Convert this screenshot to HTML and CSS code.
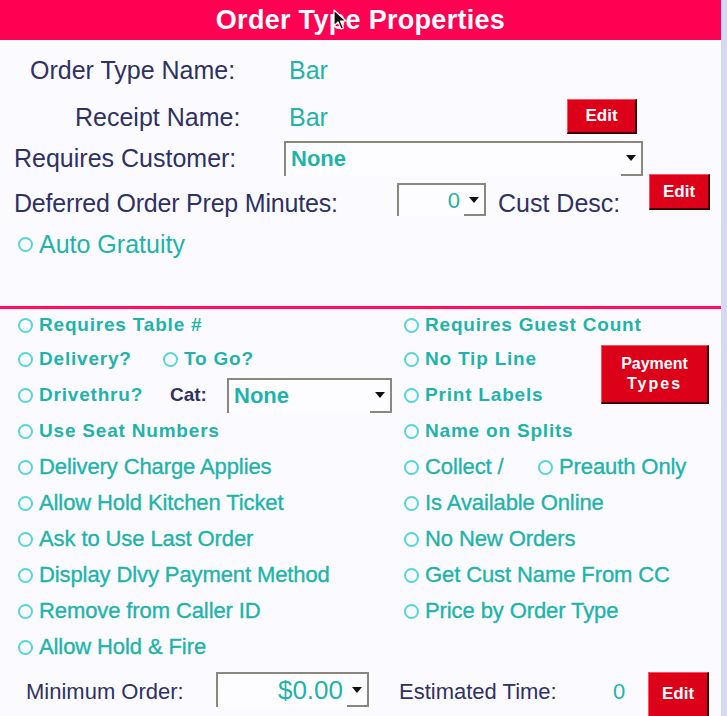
FILE: index.html
```html
<!DOCTYPE html>
<html>
<head>
<meta charset="utf-8">
<link rel="stylesheet" href="styles.css">
</head>
<body>
<div class="panel">
  <div class="header">Order Type Properties
    <svg class="cursor" width="14" height="22" viewBox="0 0 14 22"><path d="M1 1 L1 17 L5 13 L8 20 L10.5 19 L7.5 12 L13 12 Z" fill="#111" stroke="#fff" stroke-width="1.2" stroke-linejoin="round"/></svg>
  </div>

  <div class="top">
    <div class="row r1">
      <span class="lbl w-name">Order Type Name:</span>
      <span class="val">Bar</span>
    </div>
    <div class="row r2">
      <span class="lbl w-rcpt">Receipt Name:</span>
      <span class="val w-rval">Bar</span>
      <button class="btn btn-edit1">Edit</button>
    </div>
    <div class="row r3">
      <span class="lbl w-cust">Requires Customer:</span>
      <div class="combo combo-cust"><span class="combo-text">None</span><span class="combo-arrow"><i class="tri"></i></span></div>
    </div>
    <div class="row r4">
      <span class="lbl w-defer">Deferred Order Prep Minutes:</span>
      <div class="combo combo-defer"><span class="combo-text right num">0</span><span class="combo-arrow"><i class="tri"></i></span></div>
      <span class="lbl w-desc">Cust Desc:</span>
      <button class="btn btn-edit2">Edit</button>
    </div>
    <div class="row r5">
      <span class="radio"></span><span class="opt-top">Auto Gratuity</span>
    </div>
  </div>

  <div class="divider"></div>

  <div class="grid">
    <div class="cell c-left"><span class="radio"></span><span class="opt b">Requires Table #</span></div>
    <div class="cell c-right"><span class="radio"></span><span class="opt b">Requires Guest Count</span></div>

    <div class="cell c-left"><span class="pair w-deliv"><span class="radio"></span><span class="opt b">Delivery?</span></span><span class="radio"></span><span class="opt b">To Go?</span></div>
    <div class="cell c-mid"><span class="radio"></span><span class="opt b">No Tip Line</span></div>
    <button class="btn btn-pay">Payment<br><span class="pay2">Types</span></button>

    <div class="cell c-left"><span class="pair w-drive"><span class="radio"></span><span class="opt b">Drivethru?</span></span><span class="cat">Cat:</span>
      <div class="combo combo-cat"><span class="combo-text">None</span><span class="combo-arrow"><i class="tri"></i></span></div>
    </div>
    <div class="cell c-mid"><span class="radio"></span><span class="opt b">Print Labels</span></div>

    <div class="cell c-left"><span class="radio"></span><span class="opt b">Use Seat Numbers</span></div>
    <div class="cell c-right"><span class="radio"></span><span class="opt b">Name on Splits</span></div>

    <div class="cell c-left"><span class="radio"></span><span class="opt">Delivery Charge Applies</span></div>
    <div class="cell c-right"><span class="pair w-collect"><span class="radio"></span><span class="opt">Collect /</span></span><span class="radio"></span><span class="opt">Preauth Only</span></div>

    <div class="cell c-left"><span class="radio"></span><span class="opt">Allow Hold Kitchen Ticket</span></div>
    <div class="cell c-right"><span class="radio"></span><span class="opt">Is Available Online</span></div>

    <div class="cell c-left"><span class="radio"></span><span class="opt">Ask to Use Last Order</span></div>
    <div class="cell c-right"><span class="radio"></span><span class="opt">No New Orders</span></div>

    <div class="cell c-left"><span class="radio"></span><span class="opt">Display Dlvy Payment Method</span></div>
    <div class="cell c-right"><span class="radio"></span><span class="opt">Get Cust Name From CC</span></div>

    <div class="cell c-left"><span class="radio"></span><span class="opt">Remove from Caller ID</span></div>
    <div class="cell c-right"><span class="radio"></span><span class="opt">Price by Order Type</span></div>

    <div class="cell c-left"><span class="radio"></span><span class="opt">Allow Hold &amp; Fire</span></div>
  </div>

  <div class="bottom">
    <span class="lbl-sm w-min">Minimum Order:</span>
    <div class="combo combo-min"><span class="combo-text right money">$0.00</span><span class="combo-arrow"><i class="tri"></i></span></div>
    <span class="lbl-sm w-est">Estimated Time:</span>
    <span class="est-val">0</span>
    <button class="btn btn-edit3">Edit</button>
  </div>
</div>
</body>
</html>
```

FILE: styles.css
```css
html, body {
  margin: 0;
  padding: 0;
}
body {
  background: #d7d7f6;
  font-family: "Liberation Sans", Arial, sans-serif;
  width: 727px;
  height: 716px;
  overflow: hidden;
}
.panel {
  width: 721px;
  height: 716px;
  background: #fbfbff;
  overflow: hidden;
}
.header {
  position: relative;
  height: 40px;
  background: #ff0052;
  color: #fff;
  font-weight: bold;
  font-size: 27px;
  line-height: 40px;
  text-align: center;
  letter-spacing: 0.3px;
}
.cursor {
  position: absolute;
  left: 333px;
  top: 9px;
}
.top {
  height: 266px;
  box-sizing: border-box;
  padding-top: 10px;
}
.row {
  display: flex;
  align-items: center;
}
.lbl {
  color: #2f3163;
  font-size: 25px;
  white-space: nowrap;
}
.val {
  color: #1fb3a9;
  font-size: 25px;
}
.r1 { height: 40px; }
.w-name { margin-left: 30px; width: 259px; }
.r2 { height: 38px; margin-top: 8px; }
.w-rcpt { margin-left: 75px; width: 214px; }
.w-rval { width: 278px; }
.r3 { height: 36px; margin-top: 4px; }
.w-cust { margin-left: 14px; width: 270px; }
.r4 { height: 44px; align-items: flex-start; }
.r4 .lbl { line-height: 54px; }
.w-defer { margin-left: 14px; width: 383px; letter-spacing: -0.2px; }
.w-desc { margin-left: 12px; width: 151px; }
.r5 { height: 28px; margin-top: 10px; padding-left: 18px; }

.btn {
  background: #dc0018;
  color: #fff;
  font-family: "Liberation Sans", Arial, sans-serif;
  font-weight: bold;
  border: 0;
  border-top: 1px solid #ff5060;
  border-left: 1px solid #ff5060;
  border-right: 2px solid #3a0008;
  border-bottom: 2px solid #3a0008;
  padding: 0;
  box-sizing: border-box;
  cursor: default;
}
.btn-edit1 {
  width: 70px;
  height: 35px;
  font-size: 17px;
  align-self: flex-end;
  margin-bottom: 2px;
}
.btn-edit2 {
  width: 61px;
  height: 36px;
  font-size: 17px;
  margin-top: -2px;
}
.btn-edit3 {
  width: 61px;
  height: 50px;
  font-size: 17px;
  margin-left: 25px;
  padding-bottom: 6px;
}

.combo {
  display: flex;
  align-items: stretch;
  box-sizing: border-box;
  border-top: 2px solid #8a887c;
  border-left: 2px solid #8a887c;
  border-right: 2px solid #8a887c;
  background: #fdfdff;
}
.combo-text {
  flex: 1;
  color: #1fb3a9;
  font-weight: bold;
  font-size: 22px;
  display: flex;
  align-items: center;
  padding-left: 5px;
}
.combo-text.right {
  justify-content: flex-end;
  padding-right: 4px;
  font-weight: normal;
}
.combo-arrow {
  width: 20px;
  display: flex;
  align-items: center;
  justify-content: center;
  border-bottom: 2px solid #8a887c;
}
.tri {
  width: 0;
  height: 0;
  border-left: 5px solid transparent;
  border-right: 5px solid transparent;
  border-top: 6px solid #111;
}
.combo-cust {
  width: 359px;
  height: 35px;
}
.combo-defer {
  width: 89px;
  height: 33px;
  margin-top: 7px;
}
.num { font-size: 22px; }

.radio {
  display: inline-block;
  width: 15px;
  height: 15px;
  box-sizing: border-box;
  border: 2px solid #55d6d8;
  border-radius: 50%;
  margin-right: 6px;
  flex: none;
}
.opt-top {
  color: #1fb3a9;
  font-size: 25px;
}
.divider {
  height: 3px;
  background: #ff1060;
  box-shadow: 0 0 1px #ff80a0;
}

.grid {
  display: grid;
  grid-template-columns: 386px 197px 107px;
  grid-template-rows: 32px repeat(9, 36px);
  padding-left: 18px;
}
.cell {
  display: flex;
  align-items: center;
  white-space: nowrap;
}
.c-left { grid-column: 1; }
.c-right { grid-column: 2 / 4; }
.c-mid { grid-column: 2; }
.pair {
  display: flex;
  align-items: center;
}
.w-deliv { width: 145px; }
.w-drive { width: 152px; }
.w-collect { width: 134px; }
.opt {
  color: #1fb3a9;
  font-size: 22px;
  letter-spacing: -0.1px;
  -webkit-text-stroke: 0.35px #1fb3a9;
}
.opt.b {
  font-size: 19px;
  font-weight: bold;
  letter-spacing: 0.8px;
  -webkit-text-stroke: 0;
}
.cat {
  color: #2f3163;
  font-size: 19px;
  font-weight: bold;
  width: 57px;
}
.combo-cat {
  width: 165px;
  height: 35px;
}
.btn-pay {
  grid-column: 3;
  grid-row: 2 / 4;
  align-self: start;
  width: 108px;
  height: 59px;
  font-size: 16px;
  font-weight: bold;
  line-height: 20px;
  margin-top: 4px;
}
.pay2 { letter-spacing: 2px; }

.bottom {
  display: flex;
  align-items: flex-start;
  padding-top: 7px;
}
.lbl-sm {
  color: #2f3163;
  font-size: 22px;
  line-height: 40px;
  white-space: nowrap;
}
.w-min { margin-left: 26px; width: 190px; }
.combo-min {
  width: 153px;
  height: 35px;
}
.money {
  font-size: 26px;
  padding-right: 11px;
}
.w-est { margin-left: 30px; width: 214px; }
.est-val {
  color: #1fb3a9;
  font-size: 22px;
  line-height: 40px;
  width: 10px;
}
```
